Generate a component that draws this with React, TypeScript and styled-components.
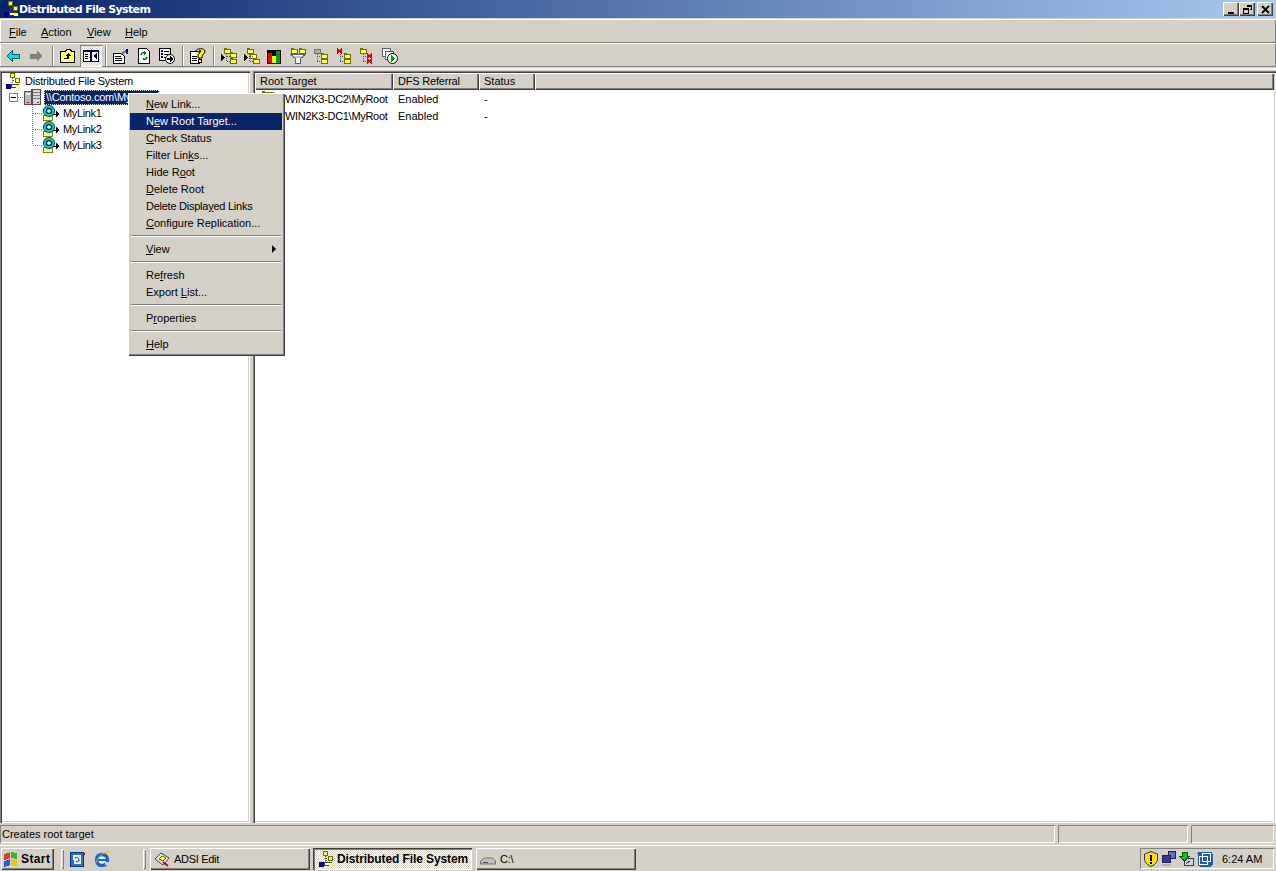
import React from "react";
import styled, { createGlobalStyle, css } from "styled-components";

const Global = createGlobalStyle`
  html, body { margin: 0; padding: 0; background: #d4d0c8; overflow: hidden; }
  body { font: 11px "Liberation Sans", Tahoma, sans-serif; color: #000; }
`;

const raised = css`box-shadow: inset 1px 1px 0 #fff, inset -1px -1px 0 #404040, inset -2px -2px 0 #808080;`;
const thinUp = css`box-shadow: inset 1px 1px 0 #fff, inset -1px -1px 0 #808080;`;
const thinDown = css`box-shadow: inset 1px 1px 0 #808080, inset -1px -1px 0 #fff;`;
const sunken = css`box-shadow: inset 1px 1px 0 #808080, inset 2px 2px 0 #404040, inset -1px -1px 0 #fff, inset -2px -2px 0 #d4d0c8;`;
const checker = css`
  background-color: #fff;
  background-image: linear-gradient(45deg, #d4d0c8 25%, transparent 25%, transparent 75%, #d4d0c8 75%), linear-gradient(45deg, #d4d0c8 25%, transparent 25%, transparent 75%, #d4d0c8 75%);
  background-size: 2px 2px;
  background-position: 0 0, 1px 1px;
`;

const Desktop = styled.div`
  width: 1276px; height: 871px; display: flex; flex-direction: column; position: relative; overflow: hidden; background: #d4d0c8;
`;
const TitleBar = styled.div`
  height: 18px; flex: none; display: flex; align-items: center; padding: 0 3px 0 3px;
  background: linear-gradient(90deg, #0a246a 0%, #2e4f8c 25%, #a6caf0 100%);
`;
const TitleText = styled.span`
  margin-left: 0; flex: 1; color: #fff; font: bold 11px "DejaVu Sans", sans-serif; letter-spacing: -0.65px;
`;
const CaptionButton = styled.div<{ $gap?: number }>`
  width: 16px; height: 14px; margin-left: ${p => p.$gap ?? 0}px; background: #d4d0c8; ${raised}
  display: flex; align-items: center; justify-content: center;
`;
const barEdge = css`box-shadow: inset 0 1px 0 #fff, inset 0 -1px 0 #808080, inset 1px 0 0 #fff, inset -1px 0 0 #808080;`;
const MenuBar = styled.div`
  height: 24px; margin-top: 1px; flex: none; display: flex; align-items: center; padding-left: 2px;
  ${barEdge}
`;
const MenuTitle = styled.span<{ $w: number }>`
  width: ${p => p.$w}px; padding-left: 7px; box-sizing: border-box; padding-top: 1px;
`;
const Accel = styled.span`text-decoration: underline; text-underline-offset: 1px;`;
const ToolBar = styled.div`
  height: 24px; box-sizing: border-box; padding: 1px 0 0 5px; flex: none; display: flex; align-items: center;
  ${barEdge}
`;
const ToolIcon = styled.div<{ $w: number }>`
  width: ${p => p.$w}px; height: 22px; flex: none; display: flex; align-items: center; justify-content: center;
`;
const ToolPressed = styled(ToolIcon)`
  ${checker} ${thinDown}
`;
const ToolSep = styled.div<{ $ml: number; $mr: number }>`
  width: 2px; height: 20px; margin: 0 ${p => p.$mr}px 0 ${p => p.$ml}px; flex: none; background: #808080; border-right: 1px solid #fff; box-sizing: border-box;
`;
const Split = styled.div`
  flex: 1; min-height: 0; display: flex; margin-top: 1px; border-top: 2px solid #f4f2ee; padding: 1px 0 2px;
`;
const TreePane = styled.div`
  width: 250px; flex: none; background: #fff; ${sunken}; padding: 2px 0 0 2px; box-sizing: border-box; margin-right: 3px;
`;
const TreeRow = styled.div<{ $indent: number }>`
  height: 16px; display: flex; align-items: center; padding-left: ${p => p.$indent}px; white-space: nowrap; letter-spacing: -0.22px;
`;
const ChildRow = styled(TreeRow)<{ $last?: boolean }>`
  position: relative; letter-spacing: -0.35px;
  &::before {
    content: ""; position: absolute; left: 30px; top: 0; width: 1px; height: ${p => (p.$last ? 8 : 16)}px;
    background-image: linear-gradient(#808080 50%, transparent 50%); background-size: 1px 2px;
  }
`;
const TreeLabel = styled.span<{ $sel?: boolean }>`
  margin-left: ${p => (p.$sel ? 3 : 2)}px; padding: 1px 2px;
  ${p => p.$sel && css`background: #0a246a; color: #fff; outline: 1px dotted #d4d0c8; outline-offset: -1px; width: 111px; height: 13px; line-height: 13px; overflow: hidden;`}
`;
const ExpandBox = styled.div`
  width: 9px; height: 9px; box-sizing: border-box; border: 1px solid #808080; background: #fff; flex: none; position: relative;
  &::after { content: ""; position: absolute; left: 1px; top: 3px; width: 5px; height: 1px; background: #000; }
`;
const DotH = styled.div<{ $w: number }>`
  width: ${p => p.$w}px; flex: none; height: 1px; background-image: linear-gradient(90deg, #808080 50%, transparent 50%); background-size: 2px 1px;
`;
const ListPane = styled.div`
  flex: 1; background: #fff; display: flex; flex-direction: column; ${sunken}; padding: 2px; min-width: 0;
`;
const HeaderRow = styled.div`
  height: 17px; flex: none; display: flex; background: #d4d0c8;
`;
const HeaderCell = styled.div<{ $w?: number; $tight?: boolean }>`
  ${p => (p.$w ? `width:${p.$w}px;flex:none;` : "flex:1;")} box-sizing: border-box; padding: 2px 0 0 5px; ${raised}
  ${p => p.$tight && "letter-spacing:-0.2px;"}
`;
const ListRow = styled.div`
  height: 17px; display: flex; align-items: center; padding-left: 4px;
`;
const ListCell = styled.div<{ $w: number }>`
  width: ${p => p.$w}px; flex: none; box-sizing: border-box; white-space: nowrap;
`;
const TargetCell = styled(ListCell)`
  display: flex; align-items: center; padding-left: 1px; gap: 9px; letter-spacing: -0.3px;
`;
const StatusBar = styled.div`
  height: 18px; flex: none; display: flex; gap: 3px; margin-bottom: 2px; padding-right: 2px;
`;
const StatusCell = styled.div<{ $w?: number }>`
  ${p => (p.$w ? `width:${p.$w}px;flex:none;` : "flex:1;")} ${thinDown}; padding: 3px 0 0 2px; box-sizing: border-box;
`;
const TaskBar = styled.div`
  height: 26px; flex: none; display: flex; align-items: center; box-shadow: inset 0 1px 0 #fff; padding: 1px 0 0 1px; box-sizing: border-box;
`;
const StartButton = styled.div`
  width: 53px; height: 22px; box-sizing: border-box; ${raised}; display: flex; align-items: center; padding-left: 2px; font-weight: bold; font-size: 12px; gap: 2px; letter-spacing: 0.4px;
`;
const TaskDivider = styled.div<{ $ml: number }>`
  width: 3px; height: 20px; flex: none; margin-left: ${p => p.$ml}px; ${thinUp};
`;
const QuickIcon = styled.div<{ $ml: number }>`
  margin-left: ${p => p.$ml}px; width: 16px; height: 16px; flex: none;
`;
const TaskButton = styled.div<{ $active?: boolean; $ml: number; $w: number }>`
  width: ${p => p.$w}px; height: 22px; margin-left: ${p => p.$ml}px; box-sizing: border-box; display: flex; align-items: center; padding-left: 4px; gap: 4px; flex: none; letter-spacing: -0.3px;
  ${p => (p.$active ? css`${checker}; box-shadow: inset 1px 1px 0 #404040, inset 2px 2px 0 #808080, inset -1px -1px 0 #fff; font-weight: bold; font-size: 12px; padding: 1px 0 0 5px; gap: 3px; letter-spacing: -0.1px;` : raised)}
`;
const Tray = styled.div`
  margin-left: auto; margin-right: 2px; width: 134px; height: 21px; box-sizing: border-box; ${thinDown}; display: flex; align-items: center; padding-left: 3px; gap: 2px;
`;
const Clock = styled.span`margin-left: 7px;`;

const Menu = styled.div`
  position: absolute; left: 128px; top: 93px; width: 157px; height: 263px; box-sizing: border-box; background: #d4d0c8; ${raised};
  padding: 3px 3px 0 2px; z-index: 3;
`;
const MenuItem = styled.div<{ $sel?: boolean; $tight?: boolean }>`
  height: 17px; line-height: 17px; padding-left: 16px; position: relative;
  ${p => p.$sel && css`background: #0a246a; color: #fff;`}
  ${p => p.$tight && "letter-spacing:-0.25px;"}
`;
const MenuSep = styled.div`
  height: 2px; margin: 3px 1px 4px 1px; background: #808080; border-bottom: 1px solid #fff; box-sizing: border-box;
`;
const MenuArrow = styled.span`
  position: absolute; right: 6px; top: 4px; width: 0; height: 0; border-left: 4px solid #000; border-top: 4px solid transparent; border-bottom: 4px solid transparent;
`;

type S = { s?: number; children?: React.ReactNode };
const Svg = ({ s = 16, children }: S) => (
  <svg width={s} height={s} viewBox="0 0 16 16" shapeRendering="crispEdges" style={{ display: "block", flex: "none" }}>{children}</svg>
);
const F = ({ x, y, c = "#ffff66" }: { x: number; y: number; c?: string }) => (
  <g>
    <rect x={x} y={y} width="3" height="1" fill="#707000" />
    <rect x={x + 0.5} y={y + 1.5} width="6" height="4" fill={c} stroke="#707000" />
  </g>
);
const D = ({ d }: { d: string }) => <path d={d} fill="none" stroke="#505050" strokeDasharray="1 1" />;
const X = ({ x, y }: { x: number; y: number }) => (
  <path d={`M${x} ${y}l5 4M${x + 5} ${y}l-5 4`} stroke="#e00000" strokeWidth="1.8" fill="none" />
);

const DfsIcon = () => (
  <Svg>
    <rect x="5.500" y="0.500" width="4" height="4" fill="#ffff60" stroke="#707000" />
    <path d="M7.500 5v7M7.500 7.500h3" stroke="#505050" strokeDasharray="1 1" />
    <rect x="10.500" y="5.500" width="4" height="4" fill="#ffff60" stroke="#707000" />
    <rect x="1" y="11" width="5" height="5" fill="#00008c" />
    <rect x="6.500" y="11.500" width="7" height="3" fill="#fff" stroke="#404040" />
    <rect x="11" y="12" width="4" height="3" fill="#ffff60" />
  </Svg>
);
const ServerIcon = () => (
  <Svg s={17}>
    <rect x="0.500" y="2.500" width="7" height="12" fill="#b8b8b8" stroke="#505050" />
    <rect x="7.500" y="0.500" width="8" height="14" fill="#d8d8d8" stroke="#505050" />
    <path d="M8 3h7M8 6h7M8 9h7" stroke="#808080" />
    <rect x="2" y="4" width="4" height="2" fill="#f0f0f0" />
    <rect x="3" y="12" width="2" height="1" fill="#d00000" />
    <rect x="12" y="12" width="2" height="1" fill="#d00000" />
  </Svg>
);
const LinkIcon = () => (
  <Svg>
    <rect x="0.500" y="10.500" width="9" height="5" fill="#ffff90" stroke="#808000" />
    <circle cx="6" cy="6" r="5.500" fill="#00d8e0" stroke="#004050" shapeRendering="auto" />
    <circle cx="6" cy="6" r="2.500" fill="#fff" stroke="#003040" strokeWidth="1.400" shapeRendering="auto" />
    <path d="M10 9h3" stroke="#000" />
    <path d="M13 5.500v7l3-3.500z" fill="#000" />
  </Svg>
);
const Back = ({ c, dir }: { c: string; dir: 1 | -1 }) => (
  <Svg>
    <g transform={dir === 1 ? undefined : "translate(16,0) scale(-1,1)"}>
      <path d="M2 8l5-5v3h7v4H7v3z" fill={c} stroke={c === "#808080" ? "#808080" : "#006070"} />
    </g>
  </Svg>
);
const UpFolder = () => (
  <Svg>
    <path d="M0.500 3.500h5l1-2h4l1 2h3v11H0.500z" fill="#ffff66" stroke="#000" />
    <path d="M8 5l3 3H9v3H4v-1h3V8H5z" fill="#000" />
  </Svg>
);
const TreeToggle = () => (
  <Svg>
    <rect x="0.500" y="2.500" width="15" height="11" fill="#fff" stroke="#00006c" />
    <rect x="0" y="2" width="16" height="2" fill="#00006c" />
    <rect x="7" y="2" width="2" height="12" fill="#00006c" />
    <path d="M2 6h3M2 8h3M2 10h3" stroke="#000" />
    <path d="M14 5v6l-4-3z" fill="#000" />
  </Svg>
);
const Props = () => (
  <Svg>
    <path d="M0.500 5.500h8l3 3v7h-11z" fill="#fff" stroke="#000" />
    <path d="M2 8h6M2 10h7M2 12h7" stroke="#000" />
    <path d="M8 6l5-3" stroke="#707070" strokeWidth="2" />
    <rect x="13" y="1" width="2" height="5" fill="#00008c" />
  </Svg>
);
const Refresh = () => (
  <Svg>
    <path d="M2.500 0.500h8l3 3v12h-11z" fill="#fff" stroke="#000" />
    <path d="M5 7c0-2 2-3 4-2M11 9c0 2-2 3-4 2" stroke="#008000" strokeWidth="1.600" fill="none" shapeRendering="auto" />
    <path d="M8 3l2 2-2 2zM8 13l-2-2 2-2z" fill="#008000" />
  </Svg>
);
const ExportIcon = () => (
  <Svg>
    <rect x="0.500" y="0.500" width="11" height="12" fill="#fff" stroke="#000" />
    <path d="M2 3h2M2 6h2M2 9h2" stroke="#00008c" strokeWidth="2" />
    <path d="M5 3h5M5 6h5M5 9h3" stroke="#000" />
    <circle cx="11" cy="11" r="4.500" fill="#fff" stroke="#000" shapeRendering="auto" />
    <path d="M8 10h3V8l3 3-3 3v-2H8z" fill="#000" />
  </Svg>
);
const HelpIcon = () => (
  <Svg>
    <path d="M0.500 3.500h9v12h-9z" fill="#fff" stroke="#000" />
    <path d="M2 8h5M2 10h5M2 12h5" stroke="#000" />
    <path d="M6 3c0-3 9-3 9 0 0 3-3 3-3 6v1H8V8c0-3 3-3 3-5-1-1-2-1-2 1z" fill="#ffff00" stroke="#000" shapeRendering="auto" />
    <rect x="8.500" y="11.500" width="3" height="3" fill="#ffff00" stroke="#000" />
  </Svg>
);
const LinkTree = ({ variant }: { variant: 1 | 2 }) => (
  <Svg>
    <F x={3} y={0} />
    {variant === 1 ? <F x={9} y={4} /> : <F x={6} y={5} />}
    <F x={9} y={10} />
    <D d="M5.500 6v8M5.500 8h3M5.500 13h3" />
    <path d="M0 6v7l3.500-3.500z" fill="#000" />
  </Svg>
);
const Bars = () => (
  <Svg>
    <rect x="0" y="2" width="14" height="14" fill="#000" />
    <rect x="1" y="5" width="4" height="10" fill="#f00000" />
    <rect x="5" y="8" width="4" height="7" fill="#ffff00" />
    <rect x="9" y="3" width="4" height="12" fill="#00a000" />
  </Svg>
);
const Filter = () => (
  <Svg>
    <F x={1} y={0} />
    <F x={9} y={0} />
    <path d="M0.500 6.500h15l-5 4v5h-5v-5z" fill="#fff" stroke="#606060" />
    <path d="M2 8h12l-4 2H6z" fill="#c0c0c0" />
  </Svg>
);
const TreeGray = () => (
  <Svg>
    <rect x="1.500" y="1.500" width="6" height="4" fill="#b0b0b0" stroke="#707070" />
    <D d="M4 6v8M4 8h4M4 13h4" />
    <F x={8} y={5} />
    <F x={8} y={10} />
  </Svg>
);
const TreeXTop = () => (
  <Svg>
    <X x={1} y={1} />
    <D d="M4 6v8M4 8h4M4 13h4" />
    <F x={8} y={5} />
    <F x={8} y={10} />
  </Svg>
);
const TreeXBottom = () => (
  <Svg>
    <F x={1} y={0} />
    <D d="M4 6v8M4 8h4M4 13h4" />
    <X x={8} y={6} />
    <X x={8} y={11} />
  </Svg>
);
const Replicate = () => (
  <Svg>
    <rect x="0.500" y="0.500" width="8" height="8" fill="#fff" stroke="#606060" />
    <rect x="3.500" y="3.500" width="8" height="8" fill="#fff" stroke="#606060" />
    <circle cx="10.500" cy="10.500" r="5" fill="#fff" stroke="#000" shapeRendering="auto" />
    <path d="M9 7l4.500 3.500L9 14z" fill="#00a000" />
  </Svg>
);
const Flag = () => (
  <Svg>
    <path d="M1 3l6-2v6l-6 2z" fill="#e04020" />
    <path d="M8 1l6 1v6l-6-1z" fill="#40b030" />
    <path d="M1 10l6-2v6l-6 2z" fill="#2060e0" />
    <path d="M8 8l6 1v6l-6-1z" fill="#f0c000" />
  </Svg>
);
const Calendar = () => (
  <Svg>
    <rect x="0.500" y="1.500" width="13" height="14" fill="#3070c0" stroke="#003080" />
    <path d="M3 4h8v9H4z" fill="#e8f0ff" />
    <path d="M5 7c2-1 4 0 4 2s-2 2-3 1" stroke="#003080" fill="none" shapeRendering="auto" />
    <rect x="13" y="2" width="2" height="2" fill="#d00000" />
  </Svg>
);
const Ie = () => (
  <Svg>
    <circle cx="8" cy="9" r="5.500" fill="#e8f4ff" stroke="#1068d0" strokeWidth="3.500" shapeRendering="auto" />
    <rect x="3" y="8" width="10" height="2" fill="#1068d0" />
    <rect x="11" y="10.500" width="5" height="3" fill="#d4d0c8" />
    <path d="M1 14C4 4 10 1 15 1" stroke="#f0b000" fill="none" shapeRendering="auto" />
  </Svg>
);
const AdsiIcon = () => (
  <Svg>
    <path d="M1 8l6-6 8 5-6 7z" fill="#e8e8e8" stroke="#404040" shapeRendering="auto" />
    <path d="M5 8l3-3 4 2-3 3z" fill="#ffff60" stroke="#606000" shapeRendering="auto" />
    <path d="M9 11l5 4" stroke="#d00000" strokeWidth="2" shapeRendering="auto" />
  </Svg>
);
const DriveIcon = () => (
  <Svg>
    <path d="M0.500 10l4-3h8l3 3v3h-15z" fill="#c0c0c0" stroke="#707070" shapeRendering="auto" />
    <rect x="3" y="11" width="5" height="1" fill="#505050" />
  </Svg>
);
const RootTarget = () => (
  <Svg>
    <F x={2} y={0} c="#ffff66" />
    <rect x="3" y="1" width="10" height="6" fill="#ffff66" stroke="#707000" />
    <rect x="9" y="3" width="6" height="5" fill="#d4d0c8" stroke="#606060" />
  </Svg>
);
const Shield = () => (
  <Svg>
    <path d="M8 0.500l6.500 2.500v5c0 4-4 6.500-6.500 7.500C5.500 14.500 1.500 12 1.500 8V3z" fill="#ffe000" stroke="#303060" shapeRendering="auto" />
    <rect x="7" y="4" width="2" height="6" fill="#000" />
    <rect x="7" y="11" width="2" height="2" fill="#000" />
  </Svg>
);
const Network = () => (
  <Svg>
    <rect x="7.500" y="0.500" width="7" height="7" fill="#6070c0" stroke="#202060" />
    <rect x="1.500" y="4.500" width="8" height="7" fill="#303890" stroke="#202060" />
    <rect x="1" y="13" width="9" height="2" fill="#b0b0b0" />
  </Svg>
);
const GreenDown = () => (
  <Svg>
    <rect x="5.500" y="7.500" width="9" height="7" fill="#d4d4d4" stroke="#404040" />
    <path d="M3 1h5v4h3l-5.500 5L0 5h3z" fill="#30b030" stroke="#006000" />
    <path d="M7 13l4-3" stroke="#404040" />
  </Svg>
);
const VmIcon = () => (
  <Svg>
    <rect x="0.500" y="0.500" width="15" height="15" rx="2" fill="#2060a8" />
    <rect x="2.500" y="5.500" width="8" height="8" fill="none" stroke="#fff" />
    <rect x="5.500" y="2.500" width="8" height="8" fill="none" stroke="#fff" />
  </Svg>
);

const Caption = ({ kind }: { kind: "min" | "max" | "close" }) => (
  <svg width="9" height="9" viewBox="0 0 9 9" shapeRendering="crispEdges">
    {kind === "min" && <rect x="1" y="7" width="6" height="2" fill="#000" />}
    {kind === "max" && <path d="M3.500 0.500h5v4h-2M3.500 1.500h5M0.500 3.500h5v5h-5zM0.500 4.500h5" stroke="#000" fill="none" />}
    {kind === "close" && <path d="M1 1l7 7M8 1l-7 7" stroke="#000" strokeWidth="1.800" fill="none" shapeRendering="auto" />}
  </svg>
);

const A = Accel;

export default function App() {
  return (
    <Desktop>
      <Global />
      <TitleBar>
        <DfsIcon />
        <TitleText>Distributed File System</TitleText>
        <CaptionButton><Caption kind="min" /></CaptionButton>
        <CaptionButton><Caption kind="max" /></CaptionButton>
        <CaptionButton $gap={2}><Caption kind="close" /></CaptionButton>
      </TitleBar>
      <MenuBar>
        <MenuTitle $w={32}><A>F</A>ile</MenuTitle>
        <MenuTitle $w={46}><A>A</A>ction</MenuTitle>
        <MenuTitle $w={38}><A>V</A>iew</MenuTitle>
        <MenuTitle $w={40}><A>H</A>elp</MenuTitle>
      </MenuBar>
      <ToolBar>
        <ToolIcon $w={16}><Back c="#00e0e0" dir={1} /></ToolIcon>
        <ToolIcon $w={7} />
        <ToolIcon $w={16}><Back c="#808080" dir={-1} /></ToolIcon>
        <ToolSep $ml={8} $mr={6} />
        <ToolIcon $w={16}><UpFolder /></ToolIcon>
        <ToolIcon $w={4} />
        <ToolPressed $w={22}><TreeToggle /></ToolPressed>
        <ToolSep $ml={3} $mr={6} />
        <ToolIcon $w={16}><Props /></ToolIcon>
        <ToolIcon $w={7} />
        <ToolIcon $w={16}><Refresh /></ToolIcon>
        <ToolIcon $w={7} />
        <ToolIcon $w={16}><ExportIcon /></ToolIcon>
        <ToolSep $ml={7} $mr={6} />
        <ToolIcon $w={16}><HelpIcon /></ToolIcon>
        <ToolSep $ml={7} $mr={6} />
        <ToolIcon $w={16}><LinkTree variant={1} /></ToolIcon>
        <ToolIcon $w={7} />
        <ToolIcon $w={16}><LinkTree variant={2} /></ToolIcon>
        <ToolIcon $w={7} />
        <ToolIcon $w={16}><Bars /></ToolIcon>
        <ToolIcon $w={7} />
        <ToolIcon $w={16}><Filter /></ToolIcon>
        <ToolIcon $w={7} />
        <ToolIcon $w={16}><TreeGray /></ToolIcon>
        <ToolIcon $w={7} />
        <ToolIcon $w={16}><TreeXTop /></ToolIcon>
        <ToolIcon $w={7} />
        <ToolIcon $w={16}><TreeXBottom /></ToolIcon>
        <ToolIcon $w={7} />
        <ToolIcon $w={16}><Replicate /></ToolIcon>
      </ToolBar>
      <Split>
        <TreePane>
          <TreeRow $indent={3}><DfsIcon /><TreeLabel>Distributed File System</TreeLabel></TreeRow>
          <TreeRow $indent={7}>
            <ExpandBox />
            <DotH $w={6} />
            <ServerIcon />
            <TreeLabel $sel>\\Contoso.com\MyRoot</TreeLabel>
          </TreeRow>
          <ChildRow $indent={31}><DotH $w={10} /><LinkIcon /><TreeLabel>MyLink1</TreeLabel></ChildRow>
          <ChildRow $indent={31}><DotH $w={10} /><LinkIcon /><TreeLabel>MyLink2</TreeLabel></ChildRow>
          <ChildRow $indent={31} $last><DotH $w={10} /><LinkIcon /><TreeLabel>MyLink3</TreeLabel></ChildRow>
        </TreePane>
        <ListPane>
          <HeaderRow>
            <HeaderCell $w={138}>Root Target</HeaderCell>
            <HeaderCell $w={86} $tight>DFS Referral</HeaderCell>
            <HeaderCell $w={56}>Status</HeaderCell>
            <HeaderCell />
          </HeaderRow>
          <ListRow>
            <TargetCell $w={139}><RootTarget />WIN2K3-DC2\MyRoot</TargetCell>
            <ListCell $w={86}>Enabled</ListCell>
            <ListCell $w={56}>-</ListCell>
          </ListRow>
          <ListRow>
            <TargetCell $w={139}><RootTarget />WIN2K3-DC1\MyRoot</TargetCell>
            <ListCell $w={86}>Enabled</ListCell>
            <ListCell $w={56}>-</ListCell>
          </ListRow>
        </ListPane>
      </Split>
      <StatusBar>
        <StatusCell>Creates root target</StatusCell>
        <StatusCell $w={130} />
        <StatusCell $w={83} />
      </StatusBar>
      <TaskBar>
        <StartButton><Flag />Start</StartButton>
        <TaskDivider $ml={7} />
        <QuickIcon $ml={6}><Calendar /></QuickIcon>
        <QuickIcon $ml={8}><Ie /></QuickIcon>
        <TaskDivider $ml={33} />
        <TaskButton $ml={4} $w={160}><AdsiIcon />ADSI Edit</TaskButton>
        <TaskButton $ml={3} $w={159} $active><DfsIcon />Distributed File System</TaskButton>
        <TaskButton $ml={4} $w={160}><DriveIcon />C:\</TaskButton>
        <Tray>
          <Shield /><Network /><GreenDown /><VmIcon />
          <Clock>6:24 AM</Clock>
        </Tray>
      </TaskBar>
      <Menu>
        <MenuItem><A>N</A>ew Link...</MenuItem>
        <MenuItem $sel>N<A>e</A>w Root Target...</MenuItem>
        <MenuItem><A>C</A>heck Status</MenuItem>
        <MenuItem>Filter Lin<A>k</A>s...</MenuItem>
        <MenuItem>Hide R<A>o</A>ot</MenuItem>
        <MenuItem><A>D</A>elete Root</MenuItem>
        <MenuItem $tight>Delete Displa<A>y</A>ed Links</MenuItem>
        <MenuItem><A>C</A>onfigure Replication...</MenuItem>
        <MenuSep />
        <MenuItem><A>V</A>iew<MenuArrow /></MenuItem>
        <MenuSep />
        <MenuItem>Re<A>f</A>resh</MenuItem>
        <MenuItem>Export <A>L</A>ist...</MenuItem>
        <MenuSep />
        <MenuItem>P<A>r</A>operties</MenuItem>
        <MenuSep />
        <MenuItem><A>H</A>elp</MenuItem>
      </Menu>
    </Desktop>
  );
}
